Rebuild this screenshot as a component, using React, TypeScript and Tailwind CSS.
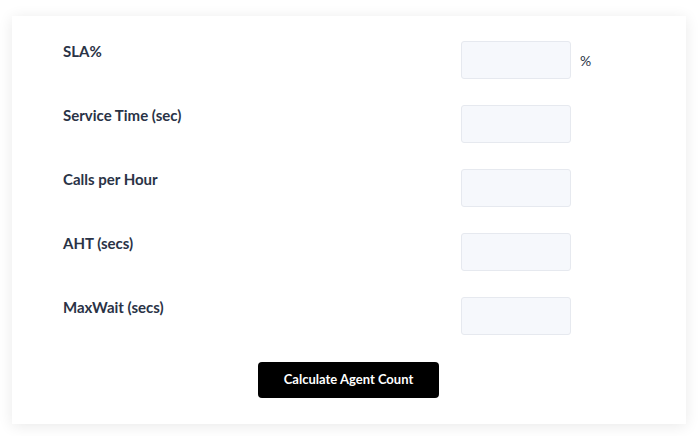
import React from "react";

const fields = [
  { label: "SLA%", suffix: "%" },
  { label: "Service Time (sec)" },
  { label: "Calls per Hour" },
  { label: "AHT (secs)" },
  { label: "MaxWait (secs)" },
];

export default function App() {
  return (
    <div className="w-[700px] h-[436px] bg-white pt-[16px] pl-[12px]" style={{ fontFamily: "Lato, 'Open Sans', sans-serif" }}>
      <div className="w-[674px] h-[408px] bg-white shadow-[0_2px_14px_rgba(0,0,0,0.09)] pt-[25px] pl-[51px] flex flex-col">
        <div className="flex flex-col gap-[26px]">
          {fields.map((f) => (
            <div key={f.label} className="flex items-start">
              <div className="w-[398px] text-[15px] leading-[20px] font-bold text-[#2a3346]">{f.label}</div>
              <div className="w-[110px] h-[38px] rounded-[3px] bg-[#f6f8fc] border border-[#e6e9ef]" />
              {f.suffix && (
                <div className="ml-[9px] h-[38px] flex items-center text-[14px] text-[#2a3346]">{f.suffix}</div>
              )}
            </div>
          ))}
        </div>
        <div className="mt-[27px] pl-[195px]">
          <button className="w-[181px] h-[36px] rounded-[4px] bg-black text-white text-[13px] font-bold">
            Calculate Agent Count
          </button>
        </div>
      </div>
    </div>
  );
}
